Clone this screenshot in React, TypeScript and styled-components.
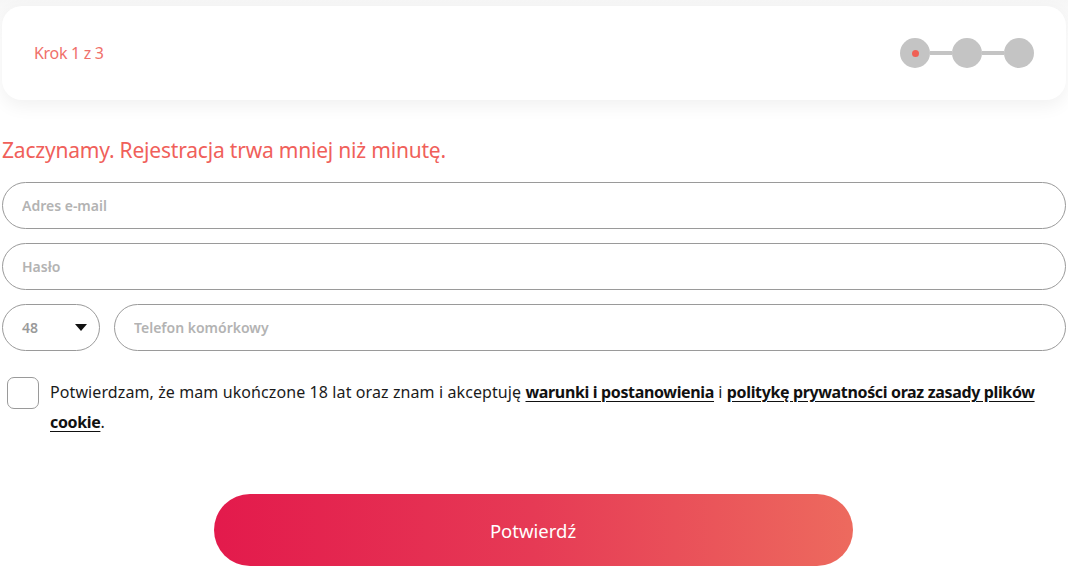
import React, { useState } from "react";
import styled, { createGlobalStyle } from "styled-components";

const GlobalStyle = createGlobalStyle`
  body {
    margin: 0;
    background: #ffffff;
    font-family: "Noto Sans", "Open Sans", sans-serif;
  }
  * { box-sizing: border-box; }
`;

const Page = styled.div`
  width: 1068px;
  height: 572px;
  overflow: hidden;
  padding: 6px 2px 0;
  background: linear-gradient(#f6f6f6 0, #ffffff 40px);
`;

const StepCard = styled.div`
  height: 94px;
  background: #fff;
  border-radius: 20px;
  box-shadow: 0 6px 18px rgba(0, 0, 0, 0.06);
  display: flex;
  align-items: center;
  justify-content: space-between;
  padding: 0 32px 0 32px;
`;

const StepLabel = styled.span`
  color: #f0706a;
  font-size: 16px;
  letter-spacing: -0.3px;
`;

const Steps = styled.div`
  display: flex;
  align-items: center;
`;

const StepDot = styled.div<{ $active?: boolean }>`
  width: 30px;
  height: 30px;
  border-radius: 50%;
  background: #c4c4c4;
  display: flex;
  align-items: center;
  justify-content: center;
  &::after {
    content: "";
    width: 7px;
    height: 7px;
    border-radius: 50%;
    background: ${(p) => (p.$active ? "#f06055" : "transparent")};
  }
`;

const StepLine = styled.div`
  width: 22px;
  height: 4px;
  background: #c4c4c4;
`;

const Title = styled.h1`
  margin: 36px 0 18px;
  font-size: 21px;
  font-weight: 400;
  color: #f0605a;
  letter-spacing: -0.2px;
  line-height: 28px;
`;

const Field = styled.input`
  display: block;
  width: 100%;
  height: 47px;
  border: 1px solid #9a9a9a;
  border-radius: 24px;
  padding: 0 19px;
  font-family: inherit;
  font-size: 14px;
  font-weight: 600;
  color: #333;
  margin-bottom: 14px;
  outline: none;
  &::placeholder { color: #b3b3b3; }
`;

const PhoneRow = styled.div`
  display: grid;
  grid-template-columns: 98px 1fr;
  gap: 14px;
`;

const CodeSelect = styled.div`
  height: 47px;
  border: 1px solid #9a9a9a;
  border-radius: 24px;
  display: flex;
  align-items: center;
  justify-content: space-between;
  padding: 0 12px 0 19px;
  font-size: 14px;
  font-weight: 600;
  color: #9a9a9a;
`;

const Caret = styled.span`
  width: 0;
  height: 0;
  border-left: 6px solid transparent;
  border-right: 6px solid transparent;
  border-top: 7px solid #111;
`;

const Consent = styled.label`
  display: flex;
  gap: 11px;
  margin-top: 12px;
  padding-left: 5px;
  font-size: 16px;
  line-height: 30px;
  color: #1b1b1b;
  letter-spacing: 0.1px;
`;

const Box = styled.input`
  appearance: none;
  flex: none;
  width: 32px;
  height: 32px;
  margin: 0;
  border: 1px solid #9a9a9a;
  border-radius: 7px;
  background: #fff;
`;

const Link = styled.a`
  color: #111;
  font-weight: 700;
  letter-spacing: -0.35px;
  text-decoration: underline;
  text-underline-offset: 3px;
`;

const SubmitWrap = styled.div`
  display: flex;
  justify-content: center;
  margin-top: 57px;
`;

const Submit = styled.button`
  width: 639px;
  height: 72px;
  margin-left: -2px;
  border: none;
  border-radius: 36px;
  background: linear-gradient(90deg, #e31a4c 0%, #e63a55 50%, #ed6a5e 100%);
  color: #fff;
  font-family: inherit;
  font-size: 18.5px;
  font-weight: 400;
`;

export default function App() {
  const [checked, setChecked] = useState(false);
  return (
    <>
      <GlobalStyle />
      <Page>
        <StepCard>
          <StepLabel>Krok 1 z 3</StepLabel>
          <Steps>
            <StepDot $active />
            <StepLine />
            <StepDot />
            <StepLine />
            <StepDot />
          </Steps>
        </StepCard>
        <Title>Zaczynamy. Rejestracja trwa mniej niż minutę.</Title>
        <Field type="email" placeholder="Adres e-mail" />
        <Field type="password" placeholder="Hasło" />
        <PhoneRow>
          <CodeSelect>
            48
            <Caret />
          </CodeSelect>
          <Field type="tel" placeholder="Telefon komórkowy" />
        </PhoneRow>
        <Consent>
          <Box type="checkbox" checked={checked} onChange={() => setChecked(!checked)} />
          <span>
            Potwierdzam, że mam ukończone 18 lat oraz znam i akceptuję{" "}
            <Link href="#">warunki i postanowienia</Link> i{" "}
            <Link href="#">politykę prywatności oraz zasady plików cookie</Link>.
          </span>
        </Consent>
        <SubmitWrap>
          <Submit>Potwierdź</Submit>
        </SubmitWrap>
      </Page>
    </>
  );
}
